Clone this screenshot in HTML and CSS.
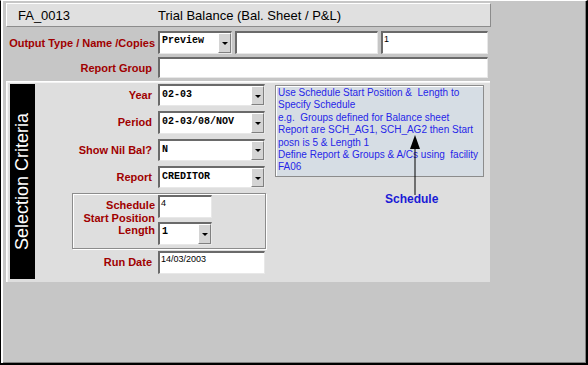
FILE: index.html
```html
<!DOCTYPE html>
<html lang="en">
<head>
    <meta charset="UTF-8">
    <title>FA_0013 Trial Balance</title>
    <link rel="stylesheet" href="styles.css">
</head>
<body>
    <div class="window">
        <div class="header">
            <span class="code">FA_0013</span>
            <span class="title">Trial Balance (Bal. Sheet / P&amp;L)</span>
        </div>

        <div class="row row-output">
            <label class="lbl">Output Type / Name /Copies</label>
            <div class="combo w-output"><span class="val">Preview</span><span class="drop"></span></div>
            <div class="field w-name"></div>
            <div class="field w-copies"><span class="txt">1</span></div>
        </div>

        <div class="row row-group">
            <label class="lbl">Report Group</label>
            <div class="field w-group"></div>
        </div>

        <div class="panel">
            <div class="side-bar"><span>Selection Criteria</span></div>

            <div class="criteria">
                <div class="crow">
                    <label class="lbl2">Year</label>
                    <div class="combo w-sel"><span class="val">02-03</span><span class="drop"></span></div>
                </div>
                <div class="crow">
                    <label class="lbl2">Period</label>
                    <div class="combo w-sel"><span class="val">02-03/08/NOV</span><span class="drop"></span></div>
                </div>
                <div class="crow">
                    <label class="lbl2">Show Nil Bal?</label>
                    <div class="combo w-sel"><span class="val">N</span><span class="drop"></span></div>
                </div>
                <div class="crow">
                    <label class="lbl2">Report</label>
                    <div class="combo w-sel"><span class="val">CREDITOR</span><span class="drop"></span></div>
                </div>

                <div class="schedule">
                    <div class="sched-labels">
                        <span>Schedule</span>
                        <span>Start Position</span>
                        <span>Length</span>
                    </div>
                    <div class="sched-inputs">
                        <div class="field w-small"><span class="txt">4</span></div>
                        <div class="combo w-small"><span class="val">1</span><span class="drop"></span></div>
                    </div>
                </div>

                <div class="crow crow-date">
                    <label class="lbl2">Run Date</label>
                    <div class="field w-sel"><span class="txt">14/03/2003</span></div>
                </div>
            </div>

            <div class="info">
                <div class="note">
                    Use Schedule Start Position &amp;&nbsp; Length to<br>
                    Specify Schedule<br>
                    e.g.&nbsp; Groups defined for Balance sheet<br>
                    Report are SCH_AG1, SCH_AG2 then Start<br>
                    posn is 5 &amp; Length 1<br>
                    Define Report &amp; Groups &amp; A/Cs using&nbsp; facility<br>
                    FA06
                </div>
                <svg class="arrow" width="12" height="60" viewBox="0 0 12 60">
                    <line x1="6" y1="10" x2="6" y2="60" stroke="#000" stroke-width="1"/>
                    <polygon points="6,0 1,14 11,14" fill="#000"/>
                </svg>
                <div class="callout">Schedule</div>
            </div>
        </div>
    </div>
</body>
</html>
```

FILE: styles.css
```css
html, body {
    margin: 0;
    padding: 0;
}
body {
    width: 588px;
    height: 365px;
    background: #c6c6c6;
    font-family: "Liberation Sans", Arial, sans-serif;
}
.window {
    box-sizing: border-box;
    width: 588px;
    height: 365px;
    background: #c6c6c6;
    border-left: 1px solid #000;
    border-top: 1px solid #fff;
    border-right: 2px solid #000;
    border-bottom: 2px solid #000;
    box-shadow: inset 2px 0 #fff, inset -1px -1px #808080;
    padding: 2px 0 0 5px;
}

/* header */
.header {
    box-sizing: border-box;
    width: 485px;
    height: 24px;
    background: #e0e0e0;
    border-top: 1px solid #fff;
    border-left: 1px solid #fff;
    border-right: 1px solid #8c8c8c;
    border-bottom: 1px solid #8c8c8c;
    display: flex;
    align-items: center;
    font-size: 13px;
    color: #000;
}
.header .code {
    width: 151px;
    padding-left: 11px;
    box-sizing: border-box;
}

/* top rows */
.row {
    display: flex;
    align-items: center;
}
.row-output {
    margin-top: 4px;
    height: 23px;
}
.row-group {
    margin-top: 3px;
    height: 21px;
}
.lbl {
    width: 152px;
    text-align: right;
    padding-right: 3px;
    box-sizing: border-box;
    color: #a00000;
    font-size: 11px;
    font-weight: bold;
}
.row-group .lbl {
    padding-right: 6px;
}

/* sunken fields */
.field, .combo {
    box-sizing: border-box;
    background: #fff;
    border-top: 2px solid #6a6a6a;
    border-left: 2px solid #6a6a6a;
    border-right: 1px solid #e8e8e8;
    border-bottom: 1px solid #e8e8e8;
    height: 100%;
    position: relative;
}
.combo {
    display: flex;
}
.combo .val {
    flex: 1;
    font-family: "Liberation Mono", "Courier New", monospace;
    font-weight: bold;
    font-size: 10px;
    padding: 2px 0 0 2px;
    color: #000;
}
.drop {
    width: 13px;
    background: #d4d4d4;
    border-left: 1px solid #fff;
    border-top: 1px solid #fff;
    border-right: 1px solid #808080;
    border-bottom: 1px solid #808080;
    box-sizing: border-box;
    position: relative;
}
.drop::after {
    content: "";
    position: absolute;
    left: 3px;
    top: 50%;
    margin-top: -1px;
    border-left: 3px solid transparent;
    border-right: 3px solid transparent;
    border-top: 3px solid #000;
}
.field .txt {
    font-size: 9px;
    padding: 1px 0 0 1px;
    display: block;
}
.w-output { width: 74px; }
.w-name { width: 143px; margin-left: 3px; }
.w-copies { width: 107px; margin-left: 3px; }
.w-group { width: 330px; }

/* selection panel */
.panel {
    margin-top: 3px;
    width: 484px;
    height: 201px;
    box-sizing: border-box;
    background: #dedede;
    border-left: 1px solid #fff;
    border-top: 1px solid #fff;
    box-shadow: inset 1px 1px #f4f4f4;
    padding: 2px 0 3px 3px;
    display: flex;
    position: relative;
}
.side-bar {
    width: 25px;
    background: #000;
    display: flex;
    align-items: center;
    justify-content: center;
}
.side-bar span {
    writing-mode: vertical-rl;
    transform: rotate(180deg);
    color: #fff;
    font-size: 18px;
    white-space: nowrap;
}
.criteria {
    width: 231px;
    display: flex;
    flex-direction: column;
}
.crow {
    display: flex;
    align-items: center;
    height: 23px;
    margin-bottom: 5px;
}
.crow-date {
    height: 24px;
}
.lbl2 {
    width: 123px;
    text-align: right;
    padding-right: 6px;
    box-sizing: border-box;
    color: #a00000;
    font-size: 11px;
    font-weight: bold;
}
.w-sel { width: 107px; }
.crow .w-sel .val { padding-top: 3px; }

.schedule {
    box-sizing: border-box;
    margin-left: 37px;
    width: 194px;
    height: 57px;
    border: 1px solid #8c8c8c;
    box-shadow: 1px 1px #fff, inset 1px 1px #fff;
    display: flex;
    margin-bottom: 2px;
    margin-top: 0;
}
.sched-labels {
    width: 82px;
    display: flex;
    flex-direction: column;
    align-items: flex-end;
    padding-top: 5px;
    color: #a00000;
    font-size: 11px;
    font-weight: bold;
    line-height: 12.5px;
}
.sched-inputs {
    margin-left: 3px;
    padding-top: 1px;
    display: flex;
    flex-direction: column;
    gap: 4px;
}
.w-small { width: 54px; height: 23px; }

/* info note */
.info {
    position: relative;
    margin-left: 9px;
    padding-top: 1px;
}
.note {
    box-sizing: border-box;
    width: 209px;
    height: 92px;
    background: #d6dde4;
    border: 1px solid #8c8c8c;
    box-shadow: inset 1px 1px #fff;
    padding: 1px 0 0 2px;
    color: #2626e8;
    font-size: 10px;
    line-height: 12.4px;
    white-space: nowrap;
}
.arrow {
    position: absolute;
    left: 134px;
    top: 51px;
}
.callout {
    margin-top: 15px;
    margin-left: 110px;
    color: #1a1ad6;
    font-size: 12px;
    font-weight: bold;
}
```
